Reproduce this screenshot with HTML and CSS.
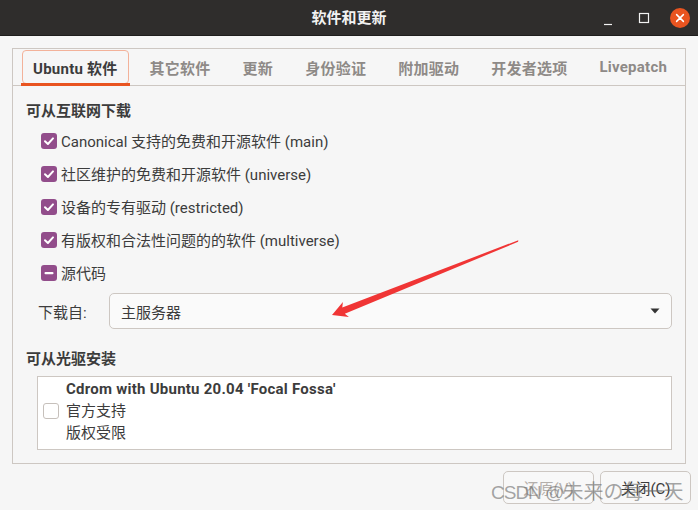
FILE: index.html
```html
<!DOCTYPE html>
<html lang="zh-CN">
<head>
<meta charset="utf-8">
<title>软件和更新</title>
<link rel="stylesheet" href="styles.css">
</head>
<body>
<div class="window">
  <header class="titlebar">
    <div class="tb-side"></div>
    <div class="tb-title">软件和更新</div>
    <div class="tb-side tb-controls">
      <span class="ctl"><svg width="20" height="20" viewBox="0 0 20 20"><line x1="6" y1="16.5" x2="14" y2="16.5" stroke="#f2f2f2" stroke-width="1.2"/></svg></span>
      <span class="ctl"><svg width="20" height="20" viewBox="0 0 20 20"><rect x="5.5" y="5.5" width="9" height="9" fill="none" stroke="#f2f2f2" stroke-width="1.2"/></svg></span>
      <span class="ctl"><svg width="20" height="20" viewBox="0 0 20 20"><circle cx="10" cy="10" r="10" fill="#e95420"/><path d="M6.6 6.6 L13.4 13.4 M13.4 6.6 L6.6 13.4" stroke="#ffffff" stroke-width="1.5" stroke-linecap="round"/></svg></span>
    </div>
  </header>

  <main class="content">
    <section class="notebook">
      <nav class="tabs">
        <div class="tab active">Ubuntu 软件</div>
        <div class="tab">其它软件</div>
        <div class="tab">更新</div>
        <div class="tab">身份验证</div>
        <div class="tab">附加驱动</div>
        <div class="tab">开发者选项</div>
        <div class="tab">Livepatch</div>
      </nav>
      <div class="page">
        <h2 class="heading">可从互联网下载</h2>
        <div class="checks">
          <div class="check-row"><span class="cb on"><svg width="16" height="16" viewBox="0 0 16 16"><path d="M4 8.3 L6.9 11 L12 5.4" fill="none" stroke="#fff" stroke-width="2" stroke-linecap="round" stroke-linejoin="round"/></svg></span><span class="check-label">Canonical 支持的免费和开源软件 (main)</span></div>
          <div class="check-row"><span class="cb on"><svg width="16" height="16" viewBox="0 0 16 16"><path d="M4 8.3 L6.9 11 L12 5.4" fill="none" stroke="#fff" stroke-width="2" stroke-linecap="round" stroke-linejoin="round"/></svg></span><span class="check-label">社区维护的免费和开源软件 (universe)</span></div>
          <div class="check-row"><span class="cb on"><svg width="16" height="16" viewBox="0 0 16 16"><path d="M4 8.3 L6.9 11 L12 5.4" fill="none" stroke="#fff" stroke-width="2" stroke-linecap="round" stroke-linejoin="round"/></svg></span><span class="check-label">设备的专有驱动 (restricted)</span></div>
          <div class="check-row"><span class="cb on"><svg width="16" height="16" viewBox="0 0 16 16"><path d="M4 8.3 L6.9 11 L12 5.4" fill="none" stroke="#fff" stroke-width="2" stroke-linecap="round" stroke-linejoin="round"/></svg></span><span class="check-label">有版权和合法性问题的的软件 (multiverse)</span></div>
          <div class="check-row"><span class="cb on"><svg width="16" height="16" viewBox="0 0 16 16"><rect x="3.5" y="7" width="9" height="2.2" rx="1" fill="#fff"/></svg></span><span class="check-label">源代码</span></div>
        </div>
        <div class="source-row">
          <span class="source-label">下载自:</span>
          <div class="combo"><span class="combo-text">主服务器</span><svg class="combo-arrow" width="10" height="6" viewBox="0 0 10 6"><path d="M0.5 0.5 L9.5 0.5 L5 5.5 Z" fill="#333"/></svg></div>
        </div>
        <h2 class="heading heading-cd">可从光驱安装</h2>
        <div class="cd-list">
          <div class="cd-item">
            <span class="cb off"></span>
            <div class="cd-text">
              <div class="cd-name">Cdrom with Ubuntu 20.04 'Focal Fossa'</div>
              <div>官方支持</div>
              <div>版权受限</div>
            </div>
          </div>
        </div>
      </div>
    </section>
    <div class="actions">
      <button class="btn btn-disabled" type="button">还原(V)</button>
      <button class="btn" type="button">关闭(C)</button>
    </div>
  </main>

  <svg class="annot" width="698" height="510" viewBox="0 0 698 510">
    <polygon points="332,315 342.9,302.1 342.3,307.4 518.3,240.2 518.1,241.8 344.8,313.8 348.9,316.9" fill="#f03535"/>
  </svg>
  <div class="watermark"><span class="wm-latin">CSDN @</span>未来の每一天</div>
</div>
</body>
</html>
```

FILE: styles.css
```css
* { box-sizing: border-box; }

html, body {
  margin: 0;
  padding: 0;
  background: #f6f6f6;
}

.window {
  position: relative;
  width: 698px;
  height: 510px;
  overflow: hidden;
  background: #f6f6f6;
  font-family: Roboto, "Noto Sans CJK SC", sans-serif;
  font-size: 15px;
  color: #3c3c3c;
}

/* title bar */
.titlebar {
  height: 36px;
  background: #2f2d2c;
  display: grid;
  grid-template-columns: 1fr auto 1fr;
  align-items: center;
  border-bottom: 1px solid #1f1e1d;
}
.tb-title {
  color: #f2f2f2;
  font-weight: 700;
  font-size: 15px;
  line-height: 20px;
}
.tb-controls {
  display: flex;
  justify-content: flex-end;
  align-items: center;
  gap: 16px;
  padding-right: 8px;
}
.ctl {
  width: 20px;
  height: 20px;
  display: block;
}
.ctl svg { display: block; }

/* content */
.content {
  padding-top: 12px;
}
.notebook {
  margin: 0 12px;
  border: 1px solid #cdc7c2;
}
.tabs {
  display: flex;
  align-items: stretch;
  height: 37px;
  padding: 1px 0 0 9px;
  border-bottom: 1px solid #cdc7c2;
}
.tab {
  position: relative;
  height: 34px;
  padding: 0 10px;
  margin-right: 10px;
  border: 1px solid transparent;
  border-radius: 4px;
  display: flex;
  align-items: center;
  font-weight: 700;
  letter-spacing: 0.25px;
  color: #8e8a87;
  white-space: nowrap;
}
.tab.active {
  color: #3c3c3c;
  border-color: #f3b29a;
}
.tab.active::after {
  content: "";
  position: absolute;
  left: -2px;
  right: -2px;
  bottom: -3px;
  height: 3px;
  background: #e95420;
}

.page {
  padding: 15px 13px 13px 13px;
}
.heading {
  margin: 0;
  font-size: 15px;
  font-weight: 700;
  line-height: 20px;
  color: #3c3c3c;
}
.checks {
  margin: 3px 0 0 15px;
  display: flex;
  flex-direction: column;
}
.check-row {
  height: 33px;
  display: flex;
  align-items: center;
  gap: 4px;
  white-space: nowrap;
}
.cb {
  width: 16px;
  height: 16px;
  flex: 0 0 16px;
  border-radius: 3px;
  display: block;
}
.cb svg { display: block; }
.cb.on { background: #924d8b; }
.cb.off {
  background: #ffffff;
  border: 1px solid #c6c0bb;
}

.source-row {
  margin: 4px 0 0 12px;
  display: flex;
  align-items: center;
}
.source-label {
  width: 71px;
  flex: 0 0 71px;
}
.combo {
  flex: 1;
  height: 36px;
  border: 1px solid #cdc7c2;
  border-radius: 5px;
  background: #fafafa;
  display: flex;
  align-items: center;
  justify-content: space-between;
  padding: 0 11px 0 11px;
}
.combo-arrow { display: block; }

.heading-cd { margin-top: 20px; }

.cd-list {
  margin: 7px 0 0 11px;
  height: 74px;
  border: 1px solid #cdc7c2;
  background: #ffffff;
}
.cd-item {
  display: flex;
  align-items: center;
  padding: 1px 0 0 5px;
  gap: 7px;
}
.cd-text {
  line-height: 22px;
}
.cd-name {
  font-weight: 700;
  letter-spacing: 0.25px;
}

/* buttons */
.actions {
  display: flex;
  justify-content: flex-end;
  gap: 6px;
  padding: 7px 7px 0 0;
}
.btn {
  width: 91px;
  height: 33px;
  border: 1px solid #cdc7c2;
  border-radius: 5px;
  background: #f8f8f8;
  font-family: Roboto, "Noto Sans CJK SC", sans-serif;
  font-size: 15px;
  color: #3c3c3c;
  padding: 0;
}
.btn-disabled { color: #b4afab; }

/* overlays: annotation arrow and watermark */
.annot {
  position: absolute;
  left: 0;
  top: 0;
  pointer-events: none;
}
.watermark {
  position: absolute;
  left: 491px;
  top: 479px;
  font-size: 20px;
  line-height: 24px;
  color: rgba(105, 105, 105, 0.6);
  white-space: nowrap;
  font-family: "Noto Sans CJK SC", sans-serif;
  pointer-events: none;
}
.wm-latin {
  font-family: "Liberation Sans", sans-serif;
  font-size: 19px;
  letter-spacing: -1px;
}
```
